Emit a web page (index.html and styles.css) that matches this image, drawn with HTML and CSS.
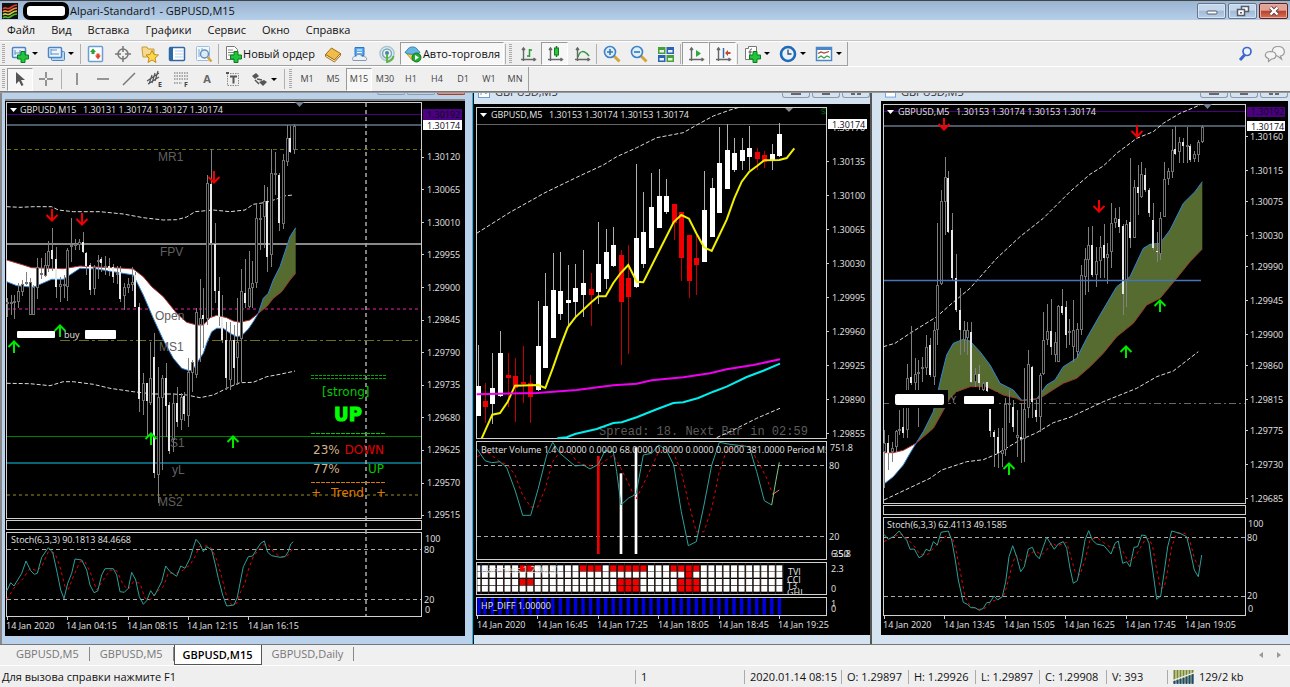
FILE: index.html
```html
<!DOCTYPE html>
<html lang="ru">
<head>
<meta charset="utf-8">
<title>Alpari-Standard1 - GBPUSD,M15</title>
<link rel="stylesheet" href="styles.css">
</head>
<body>
<svg width="0" height="0" class="defs" aria-hidden="true">
  <defs>
    <g id="down"><path d="M0-6V5M-5.500 0L0 5.500L5.500 0" fill="none" stroke="#f00000" stroke-width="2"/></g>
    <g id="up"><path d="M0 6V-5M-5.500 0L0-5.500L5.500 0" fill="none" stroke="#00e800" stroke-width="2"/></g>
    <path id="plus" d="M-2-5.500h4v3.500h3.500v4h-3.500v3.500h-4v-3.500h-3.500v-4h3.500z" fill="#1fc53a" stroke="#0a7a1c"/>
    <g id="axes" fill="none" stroke="#666" stroke-width="1.400"><path d="M4.500 3v13M2 14.500h14M3 5l1.500-2L6 5M14.500 13l2 1.500-2 1.500"/></g>
  </defs>
</svg>

<header class="titlebar">
  <svg class="logo" width="16" height="16" viewBox="0 0 16 16"><rect width="16" height="16" fill="#111"/><g fill="none" stroke-width="1.600"><path d="M1 6c3-3 4 1 7-1s4-3 7-3" stroke="#e23a2a"/><path d="M1 9c3-3 4 1 7-1s4-3 7-3" stroke="#f08a3a"/><path d="M1 12c3-3 4 1 7-1s4-3 7-3" stroke="#c8d23a"/><path d="M1 15c3-3 4 1 7-1s4-3 7-3" stroke="#52b52a"/></g></svg>
  <span class="mask"></span>
  <h1>Alpari-Standard1 - GBPUSD,M15</h1>
  <div class="winbtns">
    <button aria-label="Свернуть"><svg width="14" height="12" viewBox="0 0 14 12"><rect x="2" y="6" width="10" height="3" rx="1" fill="#fff" stroke="#555c68"/></svg></button>
    <button aria-label="Восстановить"><svg width="14" height="12" viewBox="0 0 14 12"><path d="M5.500 1.500h7v5h-7z" fill="#fff" stroke="#555c68" stroke-width="1.500"/><path d="M1.500 4.500h7v6h-7z" fill="#fff" stroke="#555c68" stroke-width="1.500"/><path d="M4 7h2v1.500H4z" fill="#555c68"/></svg></button>
    <button class="close" aria-label="Закрыть"><svg width="14" height="12" viewBox="0 0 14 12"><path d="M3.500 2.500l7 7M10.500 2.500l-7 7" stroke="#5a3a3a" stroke-width="4"/><path d="M3.500 2.500l7 7M10.500 2.500l-7 7" stroke="#fff" stroke-width="2.400"/></svg></button>
  </div>
</header>

<nav class="menu">
  <button>Файл</button><button>Вид</button><button>Вставка</button><button>Графики</button><button>Сервис</button><button>Окно</button><button>Справка</button>
</nav>

<div class="toolrow">
  <div class="toolbar" role="toolbar">
    <i class="grip"></i>
    <button class="dd" aria-label="Новый график"><svg width="18" height="18" viewBox="0 0 18 18"><rect x="1.500" y="2.500" width="13" height="10" rx="1" fill="#eaf3fc" stroke="#4a86c5" stroke-width="1.500"/><path d="M4 10V5M4 8h7M9 5v5" stroke="#5a90c8"/><use href="#plus" x="12" y="12"/></svg><b class="caret"></b></button>
    <button class="dd" aria-label="Профили"><svg width="18" height="18" viewBox="0 0 18 18"><rect x="4.500" y="6.500" width="13" height="9" rx="1" fill="#bcd7f2" stroke="#4a86c5"/><rect x="1.500" y="2.500" width="13" height="10" rx="1" fill="#eef5fc" stroke="#4a86c5" stroke-width="1.500"/><path d="M4 5h6M4 9h8M4 4v6" stroke="#5a90c8"/></svg><b class="caret"></b></button>
    <i class="sep"></i>
    <button aria-label="Обзор рынка"><svg width="18" height="18" viewBox="0 0 18 18"><rect x="1.500" y="1.500" width="14" height="15" rx="1" fill="#fff" stroke="#6a9fd6" stroke-width="1.500"/><path d="M3 7l3-3.500L9 7H7.500v2h-3V7z" fill="#28a52e"/><path d="M8 10.500l3 4 3-4h-1.500v-2h-3v2z" fill="#e0482c"/></svg></button>
    <button aria-label="Окно данных"><svg width="18" height="18" viewBox="0 0 18 18"><circle cx="9" cy="9" r="5" fill="none" stroke="#777" stroke-width="1.500"/><path d="M9 1v6M9 11v6M1 9h6M11 9h6" stroke="#777" stroke-width="1.500"/></svg></button>
    <button aria-label="Навигатор"><svg width="18" height="18" viewBox="0 0 18 18"><path d="M1 4V2h5l1 2h6v8H2z" fill="#f6d98a" stroke="#c99a33"/><path d="M11 5.500l2 4 4.500.5-3.500 3 1 4.500-4-2.500-4 2.500 1-4.500-3-3 4-.5z" fill="#fbd84a" stroke="#c48a1c"/></svg></button>
    <button aria-label="Терминал"><svg width="18" height="18" viewBox="0 0 18 18"><rect x="1.500" y="2.500" width="15" height="13" rx="1" fill="#fff" stroke="#2e68a8" stroke-width="1.500"/><path d="M3.500 3v12" stroke="#2e68a8" stroke-width="3"/><path d="M7 6h8M7 9h8M7 12h8" stroke="#b9cfe8"/></svg></button>
    <button aria-label="Тестер стратегий"><svg width="18" height="18" viewBox="0 0 18 18"><rect x="1.500" y="1.500" width="13" height="14" rx="1" fill="#f3f8fd" stroke="#9abfe0"/><path d="M4 4v8M7 3v8" stroke="#7ea6cd"/><circle cx="9.500" cy="9" r="4" fill="#d9ecfb" stroke="#6a8fb5" stroke-width="1.500"/><path d="M12.500 12l4 4.500" stroke="#d9a437" stroke-width="2.500"/></svg></button>
    <i class="sep"></i>
    <button class="order"><svg width="18" height="18" viewBox="0 0 18 18"><path d="M2.500 1.500h8l3 3v10h-11z" fill="#fff" stroke="#777"/><path d="M4 5h5M4 7.500h7M4 10h5" stroke="#888"/><use href="#plus" x="12" y="12"/></svg>Новый ордер</button>
    <button aria-label="MetaEditor"><svg width="18" height="18" viewBox="0 0 18 18"><path d="M1.500 9.500L7.500 3l9 5.500-6 6.500z" fill="#f0bd4c" stroke="#a36d14"/><path d="M1.500 9.500l9 5.500 6-6.500v2l-6 6.500-9-5.500z" fill="#fff3d0" stroke="#a36d14"/></svg></button>
    <button aria-label="VPS"><svg width="18" height="18" viewBox="0 0 18 18"><path d="M4 2.500h9v8H4z" fill="#59a9ee" stroke="#2a77c4"/><path d="M6 5h5M6 7.500h5" stroke="#fff"/><path d="M2 15.500c-1.500-3 1-4.500 3-4 1-3 5-2.500 6 0 3-1 6 2 4 4z" fill="#e9f0f8" stroke="#8597b0"/></svg></button>
    <button aria-label="Сигналы"><svg width="18" height="18" viewBox="0 0 18 18" fill="none"><circle cx="9" cy="8.500" r="7" stroke="#a8c6d8" stroke-width="1.500"/><circle cx="9" cy="8.500" r="4.500" stroke="#77a9b5" stroke-width="1.500"/><circle cx="9" cy="8" r="2" fill="#3d86b8"/><path d="M9 9v8c4-1 6-3 6.500-6" stroke="#5cb646" stroke-width="2"/></svg></button>
    <button class="auto on"><svg width="18" height="18" viewBox="0 0 18 18"><path d="M2 8l7 8 6-8z" fill="#f3cf4d" stroke="#c29522"/><path d="M1 7c3-1 2-5 7.500-5S13 6 16 7c0 3-15 3-15 0z" fill="#67b5e4" stroke="#3580b0"/><circle cx="12.500" cy="12.500" r="4.500" fill="#22aa36" stroke="#0c7a1e"/><path d="M11 10l4 2.500-4 2.500z" fill="#fff"/></svg>Авто-торговля</button>
    <i class="sep"></i>
    <i class="grip"></i>
    <button aria-label="Бары"><svg width="18" height="18" viewBox="0 0 18 18"><use href="#axes"/><path d="M10.500 4v8M8 11h2.500M10.500 5H13" stroke="#2c9a3c" stroke-width="1.500"/></svg></button>
    <button class="on" aria-label="Свечи"><svg width="18" height="18" viewBox="0 0 18 18"><use href="#axes"/><path d="M10.500 1v11" stroke="#127a22" stroke-width="1.500"/><rect x="8.500" y="3" width="4" height="7" fill="#2cc23e" stroke="#127a22"/></svg></button>
    <button aria-label="Линия"><svg width="18" height="18" viewBox="0 0 18 18"><use href="#axes"/><path d="M5 12c2-7 6-7 11-1" fill="none" stroke="#2c9a3c" stroke-width="1.500"/></svg></button>
    <i class="sep"></i>
    <button aria-label="Увеличить"><svg width="18" height="18" viewBox="0 0 18 18"><path d="M10.500 10.500l6 6" stroke="#d9a437" stroke-width="3"/><circle cx="7" cy="7" r="5.500" fill="#dff0fd" stroke="#3d83c4" stroke-width="1.600"/><path d="M4 7h6M7 4v6" stroke="#3577b8" stroke-width="1.600"/></svg></button>
    <button aria-label="Уменьшить"><svg width="18" height="18" viewBox="0 0 18 18"><path d="M10.500 10.500l6 6" stroke="#d9a437" stroke-width="3"/><circle cx="7" cy="7" r="5.500" fill="#dff0fd" stroke="#3d83c4" stroke-width="1.600"/><path d="M4 7h6" stroke="#3577b8" stroke-width="1.600"/></svg></button>
    <button aria-label="Выстроить окна"><svg width="18" height="18" viewBox="0 0 18 18"><path d="M1 2h7.500v7H1zM9.500 10H17v7H9.500z" fill="#47a03a"/><path d="M9.500 2H17v7H9.500zM1 10h7.500v7H1z" fill="#2b62b8"/><path d="M2.500 5h4.500v2.500H2.500zM11 5h4.500v2.500H11zM2.500 13h4.500v2.500H2.500zM11 13h4.500v2.500H11z" fill="#e5f1e5"/></svg></button>
    <i class="sep"></i>
    <button class="on" aria-label="Автопрокрутка"><svg width="18" height="18" viewBox="0 0 18 18"><use href="#axes"/><path d="M9 5l5 3.500L9 12z" fill="#2cab3c"/></svg></button>
    <button class="on" aria-label="Сдвиг графика"><svg width="18" height="18" viewBox="0 0 18 18"><use href="#axes"/><path d="M9.500 3v10" stroke="#2f6fb0" stroke-width="1.500"/><path d="M11 8l3-3v2h2.500v2H14v2z" fill="#c4482a"/></svg></button>
    <i class="sep"></i>
    <button class="dd" aria-label="Индикаторы"><svg width="18" height="18" viewBox="0 0 18 18"><path d="M2.500 3.500h3v-2h8v11h-2v2h-9z" fill="#fff" stroke="#777"/><path d="M9 4c-2 0-2 1-2 3v4M5.500 7H9" fill="none" stroke="#555"/><use href="#plus" x="12" y="12"/></svg><b class="caret"></b></button>
    <button class="dd" aria-label="Периоды"><svg width="18" height="18" viewBox="0 0 18 18"><circle cx="9" cy="9" r="7" fill="#e6f2fd" stroke="#1f69b8" stroke-width="2.600"/><path d="M9 4.500V9h3.500" fill="none" stroke="#445" stroke-width="1.300"/></svg><b class="caret"></b></button>
    <button class="dd" aria-label="Шаблоны"><svg width="18" height="18" viewBox="0 0 18 18"><rect x="1.500" y="2.500" width="15" height="13" fill="#fff" stroke="#4a86c5" stroke-width="1.500"/><path d="M1.500 4h15" stroke="#4a86c5" stroke-width="2"/><path d="M3 8.500l3-1.500 3 1 5-1.500" fill="none" stroke="#a4452c" stroke-width="1.300"/><path d="M3 13l3-2 3 2 3-2 3 1.500" fill="none" stroke="#3b9a4a" stroke-width="1.300"/></svg><b class="caret"></b></button>
  </div>
  <div class="rightside">
    <button aria-label="Поиск"><svg width="16" height="16" viewBox="0 0 16 16"><path d="M6.500 9L2 14" stroke="#3a66cf" stroke-width="3"/><circle cx="9" cy="5.500" r="4" fill="#eef4ff" stroke="#3a66cf" stroke-width="1.700"/></svg></button>
    <button aria-label="Чат"><svg width="22" height="18" viewBox="0 0 22 18"><path d="M14 1.500c8 0 8 9 2.500 9.500l1 3-4-3C6 10.500 7 1.500 14 1.500z" fill="#f4f4f4" stroke="#999" stroke-width="1.200"/><path d="M6.500 6.500c7 0 7 7 1 7.500l-3 2.500v-3C0 12 0 7 6.500 6.500z" fill="#f4f4f4" stroke="#999" stroke-width="1.200"/></svg></button>
  </div>
</div>

<div class="toolrow second">
  <div class="toolbar narrow" role="toolbar">
    <i class="grip"></i>
    <button class="on" aria-label="Курсор"><svg width="18" height="18" viewBox="0 0 18 18"><path d="M5 2v12l3-3 2.500 5 2-1-2.500-5h4z" fill="#555"/></svg></button>
    <button aria-label="Перекрестие"><svg width="18" height="18" viewBox="0 0 18 18"><path d="M9 2v6M9 10v6M2 9h6M10 9h6" stroke="#777" stroke-width="1.500"/></svg></button>
    <i class="sep"></i>
    <button aria-label="Вертикальная линия"><svg width="18" height="18" viewBox="0 0 18 18"><path d="M9 3v12" stroke="#777" stroke-width="1.500"/></svg></button>
    <button aria-label="Горизонтальная линия"><svg width="18" height="18" viewBox="0 0 18 18"><path d="M3 9h12" stroke="#777" stroke-width="1.500"/></svg></button>
    <button aria-label="Трендовая линия"><svg width="18" height="18" viewBox="0 0 18 18"><path d="M3 15L15 3" stroke="#777" stroke-width="1.500"/></svg></button>
    <button aria-label="Канал"><svg width="18" height="18" viewBox="0 0 18 18"><path d="M1 11L13 3M2 14L13 7M3 14l3-9M6 13l3-10M9 11l3-10" stroke="#555" stroke-width="1.200"/><text x="12" y="17" class="mini">E</text></svg></button>
    <button aria-label="Фибоначчи"><svg width="18" height="18" viewBox="0 0 18 18"><path d="M2 3h14M2 6h14M2 9h14M2 13h8" stroke="#666" stroke-width="1.200" stroke-dasharray="1.500 1"/><text x="12" y="17" class="mini">F</text></svg></button>
    <button class="letter">A</button>
    <button aria-label="Метка"><svg width="18" height="18" viewBox="0 0 18 18"><rect x="3.500" y="3.500" width="11" height="12" fill="none" stroke="#888" stroke-dasharray="1.500 1"/><path d="M6 6.500h7M9.500 6.500v7" stroke="#555" stroke-width="2"/><path d="M2 2h3v2H2z" fill="#555"/></svg></button>
    <button class="dd" aria-label="Стрелки"><svg width="18" height="18" viewBox="0 0 18 18"><path d="M2 6l4-3 3 3-4 3z" fill="#555"/><path d="M9 12l4 4 4-4-3-2z" fill="#555"/><path d="M7 9l5 1M5 10l4 4" stroke="#555" stroke-width="1.500"/></svg><b class="caret"></b></button>
    <i class="sep"></i>
    <i class="grip"></i>
    <button>M1</button><button>M5</button><button class="on">M15</button><button>M30</button><button>H1</button><button>H4</button><button>D1</button><button>W1</button><button>MN</button>
  </div>
</div>

<main class="workspace">
  <section class="win win-a">
    <div class="wintitle"><span class="stub"></span><span class="stub"></span><span class="stub red"></span></div>
    <svg class="chart" id="a" viewBox="5 101 460 535">
      <g class="frame"><rect x="6.500" y="102.500" width="415" height="416"/><rect x="6.500" y="520.500" width="415" height="9"/><rect x="6.500" y="532.500" width="415" height="84"/></g>
      <g class="rules">
        <path d="M7 114.500H421" stroke="#4b0082"/><path d="M7 125H421" stroke="#4c5866" stroke-width="2"/>
        <path d="M7 149.500H421" stroke="#6e6e00" stroke-dasharray="4 3"/>
        <path d="M7 244H421" stroke="#8a8a8a" stroke-width="2"/>
        <path d="M7 309H421" stroke="#7a1058" stroke-width="2" stroke-dasharray="3 3"/>
        <path d="M60 340.500H421" stroke="#6e6e20" stroke-dasharray="10 3 3 3"/>
        <path d="M7 436.500H421" stroke="#008000"/><path d="M7 463H421" stroke="#0a6478" stroke-width="2"/>
        <path d="M7 495H421" stroke="#4a4a10" stroke-width="2" stroke-dasharray="3 3"/>
        <path d="M7 549.500H421M7 599.500H421" stroke="#aaa" stroke-dasharray="4 3"/>
      </g>
      <g class="plot"></g>
      <g class="pivot"><text x="158" y="161">MR1</text><text x="160" y="256">FPV</text><text x="155" y="320">Open</text><text x="159" y="351">MS1</text><text x="170" y="447">S1</text><text x="172" y="474">yL</text><text x="158" y="506">MS2</text></g>
      <path d="M366 103V616" stroke="#aaa" stroke-width="1.500" stroke-dasharray="4 3"/>
      <use href="#down" x="52" y="215"/><use href="#down" x="82" y="219"/><use href="#down" x="214" y="177"/>
      <use href="#up" x="14" y="347"/><use href="#up" x="60" y="331"/><use href="#up" x="151" y="439"/><use href="#up" x="233" y="442"/>
      <rect x="17" y="331" width="38" height="7" rx="1" fill="#fff"/><rect x="85" y="330" width="31" height="9" rx="1" fill="#fff"/>
      <g class="signal">
        <path d="M311 375.500H386M311 378.500H386" stroke="#00a800" stroke-dasharray="3 1"/><path d="M311 433.500H386" stroke="#00c800" stroke-dasharray="4 1"/><path d="M311 482.500H386" stroke="#e07800" stroke-dasharray="4 1"/>
        <text x="322" y="396" fill="#00c800">[strong]</text>
        <text x="348" y="421" class="big" text-anchor="middle">UP</text>
        <text x="313" y="454" fill="#d2b48c">23%</text><text x="384" y="454" fill="#e00000" text-anchor="end">DOWN</text>
        <text x="313" y="473" fill="#d2b48c">77%</text><text x="384" y="473" fill="#00c800" text-anchor="end">UP</text>
        <text x="311" y="497" fill="#e07800">+</text><text x="331" y="497" fill="#e07800">Trend</text><text x="376" y="497" fill="#e07800">+</text>
      </g>
      <path d="M10 108h7l-3.500 4z" fill="#fff"/><path d="M295 102h9l-4.500 5z" fill="#708090"/>
      <g class="lbl">
        <text x="20" y="113">GBPUSD,M15</text><text x="83" y="113">1.30131 1.30174 1.30127 1.30174</text>
        <text x="64" y="338">buy</text>
        <text x="11" y="543">Stoch(6,3,3) 90.1813 84.4668</text>
        <rect x="423" y="109" width="39" height="11" fill="#4b0082"/><text x="427" y="118" class="dark">1.30192</text>
        <rect x="423" y="120" width="39" height="10" fill="#fff"/><text x="427" y="129" class="dark">1.30174</text>
        <text x="427" y="160">1.30120</text><text x="427" y="193">1.30065</text><text x="427" y="226">1.30010</text><text x="427" y="258">1.29955</text><text x="427" y="291">1.29900</text><text x="427" y="323">1.29845</text><text x="427" y="356">1.29790</text><text x="427" y="388">1.29735</text><text x="427" y="421">1.29680</text><text x="427" y="453">1.29625</text><text x="427" y="486">1.29570</text><text x="427" y="518">1.29515</text>
        <text x="425" y="542">100</text><text x="424" y="553">80</text><text x="424" y="603">20</text><text x="425" y="613">0</text>
        <text x="6" y="629">14 Jan 2020</text><text x="66" y="629">14 Jan 04:15</text><text x="127" y="629">14 Jan 08:15</text><text x="187" y="629">14 Jan 12:15</text><text x="248" y="629">14 Jan 16:15</text>
      </g>
      <path class="ticks" d="M7.500 617v3M67.500 617v3M128.500 617v3M188.500 617v3M248.500 617v3M422 157.500h2M422 189.500h2M422 222.500h2M422 254.500h2M422 287.500h2M422 320.500h2M422 352.500h2M422 385.500h2M422 417.500h2M422 450.500h2M422 483.500h2M422 515.500h2"/>
    </svg>
  </section>

  <section class="win win-b">
    <div class="wintitle"><svg width="12" height="11" viewBox="0 0 12 11"><rect x=".5" y=".5" width="11" height="10" fill="#fff" stroke="#6a9fd6"/><path d="M3 3v5M6 2l2 5 2-5" stroke="#6a9fd6" fill="none"/></svg><span class="cap">GBPUSD,M5</span><span class="stub min"></span><span class="stub max"></span><span class="stub cls"></span></div>
    <svg class="chart" id="b" viewBox="474 104 396 531">
      <g class="frame"><rect x="476.500" y="107.500" width="350" height="331"/><rect x="476.500" y="441.500" width="350" height="118"/><rect x="476.500" y="562.500" width="350" height="32"/><rect x="476.500" y="597.500" width="350" height="18"/></g>
      <g class="rules"><path d="M477 124.500H826" stroke="#666"/><path d="M477 465.500H826M477 536.500H826" stroke="#aaa" stroke-dasharray="4 3"/></g>
      <path d="M785 108h8l-4 4z" fill="#888"/>
      <text x="599" y="435" class="spread">Spread: 18. Next Bar in 02:59</text>
      <g class="plot"></g>
      <path d="M826 109c-5-1-6 2-3 2.500s4 3-1.500 2" fill="none" stroke="#006400"/>
      <path d="M480 113h7l-3.500 4z" fill="#fff"/>
      <g class="lbl">
        <text x="491" y="118">GBPUSD,M5</text><text x="549" y="118">1.30153 1.30174 1.30153 1.30174</text>
        <text x="832" y="131">1.30170</text><rect x="828" y="119" width="39" height="10" fill="#fff"/><text x="832" y="128" class="dark">1.30174</text>
        <text x="832" y="165">1.30135</text><text x="832" y="199">1.30100</text><text x="832" y="233">1.30065</text><text x="832" y="267">1.30030</text><text x="832" y="301">1.29995</text><text x="832" y="335">1.29960</text><text x="832" y="369">1.29925</text><text x="832" y="403">1.29890</text><text x="832" y="437">1.29855</text>
        <svg x="477" y="442" width="349" height="117" viewBox="477 442 349 117"><text x="481" y="453">Better Volume 1.4 0.0000 0.0000 68.0000 0.0000 0.0000 0.0000 381.0000  Period M5 St</text></svg>
        <text x="830" y="451">751.8</text><text x="829" y="469">80</text><text x="829" y="540">20</text><text x="831" y="557">6.50</text><text x="833" y="557">35.8</text>
        <text x="481" y="573">Hareness 1.22(0,3)</text>
        <svg x="477" y="563" width="349" height="31" viewBox="477 563 349 31"><text x="788" y="575">TVI</text><text x="787" y="583">CCI</text><text x="787" y="589">T3.</text><text x="787" y="596">GHI</text></svg>
        <text x="831" y="572">2.3</text><text x="831" y="592">0</text>
        <text x="481" y="609">HP_DIFF 1.00000</text><text x="831" y="607">1</text><text x="831" y="612">0</text>
        <text x="477" y="628">14 Jan 2020</text><text x="537" y="628">14 Jan 16:45</text><text x="597" y="628">14 Jan 17:25</text><text x="658" y="628">14 Jan 18:05</text><text x="718" y="628">14 Jan 18:45</text><text x="778" y="628">14 Jan 19:25</text>
      </g>
      <path class="ticks" d="M477.500 616v3M537.500 616v3M598.500 616v3M658.500 616v3M719.500 616v3M779.500 616v3M827 161.500h2M827 195.500h2M827 229.500h2M827 263.500h2M827 297.500h2M827 331.500h2M827 365.500h2M827 399.500h2M827 433.500h2"/>
    </svg>
  </section>

  <section class="win win-c">
    <div class="wintitle"><svg width="11" height="11" viewBox="0 0 12 11"><rect x=".5" y=".5" width="11" height="10" fill="#fff" stroke="#6a9fd6"/></svg><span class="cap">GBPUSD,M5</span><span class="stub min"></span><span class="stub max"></span><span class="stub cls"></span></div>
    <svg class="chart" id="c" viewBox="881 101 407 534">
      <g class="frame"><rect x="883.500" y="104.500" width="362" height="399"/><rect x="883.500" y="505.500" width="362" height="9"/><rect x="883.500" y="517.500" width="362" height="98"/></g>
      <g class="rules"><path d="M884 111.500H1245" stroke="#4b0082"/><path d="M884 126H1245" stroke="#4c5866" stroke-width="2"/><path d="M884 403.500H1245" stroke="#666" stroke-dasharray="7 3 2 3"/><path d="M884 537.500H1245M884 596H1245" stroke="#aaa" stroke-dasharray="4 3"/></g>
      <g class="plot"></g>
      <path d="M884 280.500H1201" stroke="#4a74b8" stroke-width="1.500"/>
      <rect x="889" y="390" width="59" height="18" fill="#000"/><rect x="956" y="392" width="42" height="17" fill="#000"/>
      <rect x="895" y="394" width="49" height="11" rx="2" fill="#fff"/><rect x="964" y="396" width="30" height="8" rx="1" fill="#fff"/>
      <use href="#down" x="944" y="124"/><use href="#down" x="1099" y="206"/><use href="#down" x="1137" y="131"/>
      <use href="#up" x="1160" y="306"/><use href="#up" x="1126" y="352"/><use href="#up" x="1009" y="469"/>
      <path d="M887 110h7l-3.500 4z" fill="#fff"/><path d="M1203 104h9l-4.500 5z" fill="#708090"/>
      <g class="lbl">
        <text x="898" y="115">GBPUSD,M5</text><text x="956" y="115">1.30153 1.30174 1.30153 1.30174</text><text x="951" y="403" class="grey">Y</text>
        <rect x="1247" y="107" width="38" height="10" fill="#4b0082"/><text x="1251" y="115" class="dark">1.30192</text>
        <rect x="1247" y="121" width="38" height="10" fill="#fff"/><text x="1251" y="130" class="dark">1.30174</text>
        <text x="1250" y="140">1.30160</text><text x="1250" y="174">1.30115</text><text x="1250" y="205">1.30075</text><text x="1250" y="239">1.30030</text><text x="1250" y="270">1.29990</text><text x="1250" y="304">1.29945</text><text x="1250" y="338">1.29900</text><text x="1250" y="369">1.29860</text><text x="1250" y="403">1.29815</text><text x="1250" y="434">1.29775</text><text x="1250" y="468">1.29730</text><text x="1250" y="502">1.29685</text>
        <text x="887" y="528">Stoch(6,3,3) 62.4113 49.1585</text>
        <text x="1248" y="527">100</text><text x="1247" y="541">80</text><text x="1247" y="599">20</text><text x="1248" y="612">0</text>
        <text x="883" y="628">14 Jan 2020</text><text x="944" y="628">14 Jan 13:45</text><text x="1004" y="628">14 Jan 15:05</text><text x="1064" y="628">14 Jan 16:25</text><text x="1125" y="628">14 Jan 17:45</text><text x="1185" y="628">14 Jan 19:05</text>
      </g>
      <path class="ticks" d="M884.500 616v3M944.500 616v3M1005.500 616v3M1065.500 616v3M1126.500 616v3M1186.500 616v3M1246 136.500h2M1246 170.500h2M1246 201.500h2M1246 235.500h2M1246 266.500h2M1246 300.500h2M1246 334.500h2M1246 365.500h2M1246 399.500h2M1246 430.500h2M1246 464.500h2M1246 498.500h2"/>
    </svg>
  </section>
</main>

<div class="tabs" role="tablist">
  <button role="tab">GBPUSD,M5</button><button role="tab">GBPUSD,M5</button><button role="tab" class="active" aria-selected="true">GBPUSD,M15</button><button role="tab">GBPUSD,Daily</button>
  <div class="scroll"><button aria-label="Влево"><svg width="6" height="8" viewBox="0 0 6 8"><path d="M5 1L1 4l4 3z" fill="#999"/></svg></button><button aria-label="Вправо"><svg width="6" height="8" viewBox="0 0 6 8"><path d="M1 1l4 3-4 3z" fill="#999"/></svg></button></div>
</div>

<footer class="status">
  <span class="help">Для вызова справки нажмите F1</span><span>1</span><span>2020.01.14 08:15</span><span>O: 1.29897</span><span>H: 1.29926</span><span>L: 1.29897</span><span>C: 1.29908</span><span>V: 393</span>
  <span class="net"><svg width="22" height="14" viewBox="0 0 22 14"><path d="M1.500 0v13M4.500 0v13M7.500 0v13M10.500 0v13M13.500 0v13M16.500 0v13M19.500 0v13" stroke="#78882a" stroke-width="2"/><path d="M1.500 11v3M4.500 10v4M7.500 9v5M10.500 8v6M13.500 6.500v7.500M16.500 5v9M19.500 4v10" stroke="#1c4a70" stroke-width="2"/><path d="M0 10.500l8-3L22 2.500" stroke="#f0f0f0" stroke-width="1.300" fill="none"/></svg>129/2 kb</span>
</footer>
<script src="chart.js"></script>
</body>
</html>
```
FILE: styles.css
```css
* { box-sizing: border-box; }
body {
  margin: 0;
  min-height: 100vh;
  display: flex;
  flex-direction: column;
  background: #efefef;
  color: #111;
  font: 11px/14px "Open Sans", "Noto Sans", sans-serif;
}
.defs { position: absolute; }
button {
  border: 0;
  padding: 0;
  background: none;
  color: inherit;
  font: inherit;
}
svg { display: block; flex: none; }

.titlebar {
  display: flex;
  align-items: center;
  height: 20px;
  padding: 0 2px;
  border-top: 1px solid #444;
  background: linear-gradient(#99b4d1, #b6cfe9);
}
.mask {
  width: 46px;
  height: 18px;
  margin: 0 1px 0 5px;
  border: 4px solid #000;
  border-radius: 7px;
  background: #fff;
}
.titlebar h1 { margin: 0; font-size: 11px; font-weight: 400; }
.winbtns { display: flex; gap: 2px; margin-left: auto; }
.winbtns button {
  display: grid;
  place-items: center;
  width: 29px;
  height: 16px;
  border: 1px solid #66758c;
  border-radius: 2px;
  background: linear-gradient(#c3d6ea 45%, #a1bad6 50%, #b8cfe8);
  box-shadow: inset 0 0 0 1px #d5e3f2;
}
.winbtns .close {
  border-color: #6a1d14;
  background: linear-gradient(#e0a396 45%, #b8402a 50%, #d47358);
  box-shadow: inset 0 0 0 1px #e5aca0;
}

.menu { display: flex; gap: 16px; height: 21px; padding-left: 7px; border-bottom: 1px solid #c4c4c4; }

.toolrow {
  display: flex;
  justify-content: space-between;
  height: 25px;
  border-top: 1px solid #fff;
}
.toolbar {
  display: flex;
  align-items: center;
  border-right: 1px solid #a0a0a0;
  border-bottom: 1px solid #a0a0a0;
  white-space: nowrap;
}
.toolrow.second { height: 26px; border-bottom: 1px solid #777; }
.second .toolbar { border-bottom: 0; font-size: 9px; color: #444; }
.grip {
  width: 3px;
  height: 20px;
  margin: 0 2px;
  background: repeating-linear-gradient(#aaa 0 1px, #efefef 1px 2px);
}
.sep { width: 1px; height: 20px; margin: 0 1px; background: #b0b0b0; }
.narrow .sep { margin: 0 2px; }
.toolbar button {
  display: flex;
  align-items: center;
  justify-content: center;
  width: 27px;
  height: 23px;
  border: 1px solid transparent;
}
.toolbar.narrow button { width: 26px; }
.toolbar button.on {
  border-color: #9a9a9a #fff #fff #9a9a9a;
  background: #f7f7f7;
}
.toolbar button.dd,
.toolbar.narrow button.dd { width: 36px; gap: 3px; padding-right: 1px; }
.toolbar button.order { width: 99px; gap: 1px; }
.toolbar button.auto { width: 104px; gap: 1px; }
.caret { border: 3px solid transparent; border-top-color: #000; border-bottom: 0; }
.toolbar .letter { font-size: 11px; font-weight: 700; color: #666; }
.mini { font: 700 7px "Open Sans", sans-serif; fill: #444; }
.rightside { display: flex; align-items: center; gap: 10px; padding-right: 4px; }

.workspace {
  display: grid;
  grid-template-columns: 473fr 397fr 420fr;
  align-items: stretch;
  border-top: 1px solid #999;
  border-bottom: 1px solid #777;
  overflow: hidden;
}
.win { background: #b9d1ea; min-width: 0; padding-bottom: 8px; }
.win-a { padding-left: 3px; padding-right: 7px; border-left: 2px solid #888; border-right: 1px solid #20b8e0; }
.win-b { border-left: 1px solid #111; background: #d5e2f0; }
.win-c { border-left: 2px solid #555; padding-left: 9px; padding-right: 2px; background: #d5e2f0; }
.wintitle { display: flex; justify-content: flex-end; gap: 2px; height: 8px; overflow: hidden; }
.win-b .wintitle { height: 11px; }
.win-a .wintitle { border-bottom: 2px solid #888; }
.wintitle svg { margin: -6px 0 0 4px; }
.cap { margin: -8px auto 0 3px; color: #333; }
.stub {
  width: 28px;
  height: 5px;
  border: 1px solid #8a9bb0;
  border-top: 0;
  border-radius: 0 0 3px 3px;
  background: no-repeat 50% 0 / 10px 2px;
}
.win-a .stub { height: 2px; }
.stub.red { border-color: #a04030; background: #dd9080; }
.stub.min,
.stub.max,
.stub.cls { background-image: linear-gradient(#667, #667); }
.stub.max { background-size: 8px 2px; }
.stub.cls { background-image: linear-gradient(90deg, #667 40%, transparent 40% 60%, #667 60%); }
.chart { width: 100%; height: auto; background: #000; }

.frame rect { fill: none; stroke: #d0d0d0; shape-rendering: crispEdges; }
.rules path, .ticks, .candles { shape-rendering: crispEdges; }
.ticks { fill: none; stroke: #ccc; }
.lbl { font: 9px "Open Sans", "Noto Sans", sans-serif; fill: #e4e4e4; white-space: pre; }
.lbl .dark { fill: #0a0a14; }
.lbl .grey { fill: #888; }
.pivot { font: 12px "Liberation Sans", Arial, sans-serif; fill: #606060; }
.signal { font: 12px "DejaVu Sans", sans-serif; }
.signal .big { font: 700 20px "DejaVu Sans Condensed", sans-serif; fill: #0f0; stroke: #0f0; }
.spread { font: 12px "Liberation Mono", monospace; fill: #5c5c5c; }

.tabs {
  display: flex;
  height: 20px;
  padding-left: 6px;
  background: #f0f0f0;
  color: #777;
}
.tabs > button { margin: 2px 0 4px; padding: 0 10px; border-right: 1px solid #888; }
.tabs > button.active {
  margin: 0;
  padding: 0 8px;
  border: 1px solid #555;
  border-top: 0;
  background: #fff;
  color: #000;
  font-weight: 600;
}
.scroll { display: flex; gap: 12px; align-items: center; margin-left: auto; padding-right: 8px; }

.status {
  display: grid;
  grid-template-columns: 1fr 109px 97px 67px 67px 64px 67px 61px 123px;
  align-items: center;
  flex: 1;
  min-height: 21px;
  border-top: 1px solid #fff;
}
.status span { padding-left: 5px; border-left: 1px solid #aaa; white-space: nowrap; }
.status .help { padding-left: 2px; border: 0; }
.status .net { display: flex; align-items: center; gap: 4px; }
```
FILE: chart.js
```javascript
// Plot data is stored in thirds of a pixel, measured from each chart's origin.
const NS = 'http://www.w3.org/2000/svg';

function add(parent, name, attrs) {
  const node = document.createElementNS(NS, name);
  for (const key in attrs) node.setAttribute(key, attrs[key]);
  parent.appendChild(node);
  return node;
}

function plot(id, ox, oy) {
  const root = document.querySelector('#' + id + ' .plot');
  const px = (v, o) => Math.round(v / 3 + o);
  const pts = (s, dy) => s.trim().split(/\s+/).map(p => {
    const [x, y] = p.split(',').map(Number);
    return (x / 3 + ox).toFixed(1) + ',' + ((y + (dy || 0)) / 3 + oy).toFixed(1);
  }).join(' ');
  return {
    line(s, stroke, width, dash, dy) {
      add(root, 'polyline', { points: pts(s, dy), fill: 'none', stroke, 'stroke-width': width || 1, 'stroke-dasharray': dash || 'none' });
    },
    area(top, bottom, fill) {
      const back = bottom.trim().split(/\s+/).reverse().join(' ');
      add(root, 'polygon', { points: pts(top + ' ' + back), fill });
      this.line(top, fill === '#fff' ? '#b03030' : '#2f86d8', 1);
      this.line(bottom, fill === '#fff' ? '#2f86d8' : '#9c3a28', 1);
    },
    candles(rows, style) {
      const g = add(root, 'g', { class: 'candles' });
      rows.trim().split('\n').forEach(row => {
        const [x, hi, lo, top, bot, kind] = row.trim().split(' ');
        const cx = px(+x, ox), y1 = px(+hi, oy), y2 = px(+lo, oy), t = px(+top, oy), h = Math.max(1, px(+bot, oy) - t);
        if (style === 'wide') {
          const red = kind === 'r';
          add(g, 'rect', { x: cx, y: y1, width: 1, height: y2 - y1, fill: red ? '#c00000' : '#b0b0b0' });
          add(g, 'rect', { x: cx - 2, y: t, width: 5, height: h, fill: red ? '#f00000' : '#fff' });
        } else {
          add(g, 'rect', { x: cx, y: y1, width: 1, height: y2 - y1, fill: '#808080' });
          if (kind === '1') add(g, 'rect', { x: cx - 1, y: t, width: 2, height: h, fill: '#e8e8e8' });
          else add(g, 'rect', { x: cx - 0.5, y: t + 0.5, width: 2, height: Math.max(1, h - 1), fill: '#000', stroke: '#707070' });
        }
      });
    },
    block(x, y, w, h, fill) {
      add(root, 'rect', { x: x / 3 + ox, y: y / 3 + oy, width: w / 3, height: h / 3, fill });
    }
  };
}

const DASH = '4 2', TEAL = '#2ea098', RED = '#e80000', OLIVE = '#556b2f';

// GBPUSD,M15
const a = plot('a', 0, 95);
a.area('20,495 70,510 95,518 190,521 240,513 290,516 360,519 400,522 430,545 455,575 490,605 530,655 560,682 590,690 610,690 630,668 650,661 680,668 700,678 720,682 750,675 775,655',
  '20,560 50,572 100,577 155,553 190,553 240,520 290,522 400,540 430,600 460,670 490,735 520,790 545,820 570,828 585,815 600,790 610,775 622,740 635,710 650,700 670,700 690,715 710,725 725,722 745,702 760,680 775,655', '#fff');
a.area('775,655 790,610 805,595 820,555 840,515 855,470 870,425 887,398', '775,655 800,635 820,610 845,590 870,555 887,535', OLIVE);
a.line('20,335 60,337 100,335 155,335 175,345 220,350 300,350 370,357 430,368 490,375 530,374 560,366 585,350 640,345 690,350 735,345 760,328 800,322 830,312 850,303 880,300', '#ddd', 1, DASH);
a.line('20,865 90,866 150,872 190,860 220,860 280,868 330,880 400,890 460,897 520,897 560,900 600,908 640,900 690,875 720,863 760,862 800,845 840,838 885,828', '#ddd', 1, DASH);
a.candles(`22 610 665 620 624 0
33 600 660 620 624 0
43 600 673 619 623 0
54 565 640 588 620 0
66 555 602 568 592 0
78 530 570 560 568 0
89 550 659 562 659 0
100 570 659 575 659 0
112 488 612 515 578 0
123 490 552 533 537 0
134 475 546 510 543 0
145 437 530 467 512 0
157 400 527 464 492 1
168 457 608 493 577 1
180 545 620 568 577 0
191 540 608 568 573 0
202 460 617 466 575 0
214 369 500 450 453 0
225 432 465 447 451 0
236 433 466 440 449 0
248 411 473 441 471 1
259 472 540 474 512 1
271 504 600 511 585 1
282 511 600 515 583 0
293 480 552 495 500 0
304 487 532 493 505 1
315 483 540 512 514 0
327 489 543 512 528 1
338 506 564 517 545 1
350 513 568 533 537 0
361 514 620 530 611 1
373 565 646 575 603 0
384 550 595 568 579 0
395 516 588 560 570 0
406 532 637 540 635 1
418 625 950 635 912 1
429 835 960 865 917 0
440 865 1030 865 917 1
451 740 930 850 925 0
462 715 1150 785 1135 1
474 815 1225 907 1140 0
486 840 1125 850 908 0
497 805 1025 850 932 1
508 920 1078 930 1068 1
520 893 1070 925 1035 0
531 875 995 925 980 1
542 895 1005 905 975 0
553 890 978 903 958 1
565 790 995 830 963 0
576 795 890 800 835 0
588 640 850 650 840 0
599 553 800 670 690 0
610 580 760 660 673 1
622 240 690 265 672 0
633 163 665 268 445 1
644 385 625 448 588 1
656 545 692 588 665 1
667 600 745 665 735 1
679 680 885 735 848 1
690 680 885 735 855 0
701 690 870 735 820 1
712 610 870 740 790 0
724 522 860 588 733 0
735 493 640 593 625 1
746 467 640 580 637 0
757 497 640 565 580 0
769 325 578 370 565 0
780 330 465 370 373 0
791 270 460 317 365 0
802 275 532 318 485 1
814 163 515 235 480 0
826 172 300 235 240 0
837 235 407 240 385 1
848 178 403 195 388 0
860 90 213 130 200 0
871 93 175 130 170 1
883 88 177 93 165 0`);
a.line('20,718 45,680 70,655 90,625 110,632 125,620 145,575 165,580 180,620 195,680 205,688 220,650 240,605 255,605 270,635 290,690 310,660 330,630 350,632 370,675 385,688 400,665 420,670 435,715 450,720 470,695 490,680 505,640 530,640 550,630 570,615 585,590 598,560 620,557 635,565 650,600 665,650 680,710 695,735 710,730 720,700 735,670 745,630 760,590 775,570 790,555 805,553 820,575 840,590 860,590 875,570 880,562', RED, 1, '3 3', 795);
a.line('20,693 32,668 42,678 65,640 78,603 92,632 103,643 112,640 125,592 145,563 158,577 172,640 182,690 192,716 203,670 215,640 225,597 245,600 260,630 270,675 282,698 293,693 305,645 315,626 340,626 350,645 360,695 373,697 385,685 395,637 407,660 418,710 430,733 440,722 452,692 463,708 475,685 485,665 497,618 510,635 530,649 542,618 555,625 570,595 580,563 588,538 600,552 610,575 620,560 635,570 645,610 655,655 668,705 680,738 702,735 712,712 720,670 730,620 745,590 758,588 770,568 782,550 793,543 803,577 815,587 840,592 855,590 865,575 872,552 880,545', TEAL, 1, '', 795);

// GBPUSD,M5
const b = plot('b', 470, 85);
b.line('20,445 120,382 225,323 320,277 400,240 440,215 500,188 560,158 640,143 680,120 730,93 780,75 808,67', '#ddd', 1, DASH);
b.line('740,1058 800,1030 860,1000 930,970', '#ddd', 1, DASH);
b.candles(`24 780 993 903 993 w
44 895 1015 947 965 r
67 803 1017 908 956 w
90 738 935 803 932 w
113 803 965 870 880 r
135 820 1010 872 910 r
158 783 953 890 898 r
181 870 1013 893 937 r
203 648 918 783 915 w
226 563 850 662 850 w
248 503 760 615 758 w
271 500 705 617 687 w
293 541 720 645 653 w
316 537 700 608 651 w
340 495 697 594 631 w
362 563 722 612 630 r
385 412 658 538 622 w
407 432 613 500 583 w
430 427 545 480 543 w
453 495 840 509 651 r
475 480 808 580 636 r
498 237 608 460 607 w
520 322 548 441 537 w
543 265 490 366 489 w
566 251 430 333 430 w
589 282 387 333 381 w
611 357 465 357 413 r
634 382 588 382 518 r
657 450 640 450 589 r
679 450 630 518 541 r
702 257 532 376 531 w
725 280 455 309 455 w
747 126 384 234 384 w
770 118 311 195 311 w
793 158 260 203 255 w
815 160 255 195 228 w
838 123 255 190 215 w
860 190 255 201 223 r
883 197 250 209 231 r
906 176 255 206 227 w
928 115 215 147 214 w`, 'wide');
b.line('35,1060 67,989 90,984 113,950 135,902 205,900 226,909 248,850 271,785 293,727 316,697 362,653 385,634 407,634 430,594 453,563 475,540 500,590 520,592 566,500 611,411 634,390 657,401 679,445 702,487 725,498 747,452 770,404 793,340 815,290 838,260 860,244 883,226 928,225 950,219 973,190', '#f0f000', 2);
b.line('20,928 200,924 320,915 430,901 500,896 545,886 640,877 720,865 770,853 850,840 930,823', '#f000f0', 2);
b.line('262,1060 290,1057 315,1047 380,1032 430,1014 455,1012 500,997 560,973 610,954 640,952 685,939 730,920 770,905 830,876 880,857 930,836', '#00f0f0', 2);
b.block(381, 1113, 8, 294, '#f00000');
b.block(449, 1165, 8, 242, '#fff');
b.block(494, 1087, 8, 320, '#fff');
b.line('22,65 50,50 90,80 113,90 135,120 158,180 182,216 203,216 226,160 248,80 270,50 300,50 320,80 350,92 385,92 430,60 453,100 498,193 543,100 566,50 589,45 611,55 634,110 655,200 679,290 702,290 725,220 748,110 770,45 815,30 840,38 870,90 890,130 908,178', RED, 1, '3 3', 1050);
b.line('908,178 928,165', '#e08050', 1, '', 1050);
b.line('22,43 45,77 65,83 90,80 110,98 135,165 158,241 182,241 205,160 230,60 248,22 270,55 315,93 340,90 360,102 385,88 405,47 430,50 440,110 453,210 475,190 498,178 520,60 545,55 566,30 589,45 611,90 634,230 655,332 679,320 702,210 725,90 748,22 780,28 838,35 860,110 883,197 905,210', TEAL, 1, '', 1050);
b.line('905,210 917,140 928,82', '#80c880', 1, '', 1050);

// Indicator grid: one column for each bar, red cells mark a falling signal
const cells = [
  [6, 7, 14, 15, 16, 18, 19, 20, 21, 22, 26, 27, 28, 29],
  [28],
  [6, 7, 19, 20, 21, 27, 28, 29],
  [19, 20, 21, 27, 28, 29]
];
cells.forEach((reds, r) => {
  for (let i = 0; i <= 40; i++) {
    const x = 22 + i * 22.65, y = 1441 + [0, 19, 41, 61][r];
    b.block(Math.max(22, x - 9), y, i ? 18 : 9, 18, reds.includes(i) ? '#f00000' : '#fff');
    if (r === 0) b.block(x + 10, 1435, 2, 92, '#4a3020');
  }
});
for (let i = 0; i <= 40; i++) b.block(Math.max(22, 17 + i * 22.65), 1539, 10, 50, '#0000e8');

// GBPUSD,M5 with cloud
const c = plot('c', 870, 85);
c.area('42,1103 70,1103 100,1096 138,1075', '42,1197 70,1175 100,1140 120,1105 138,1075', '#fff');
c.area('138,1075 160,1040 190,980 205,915 215,870 230,810 250,775 280,763 300,768 330,800 360,840 390,895 430,915 455,946', '138,1075 190,1030 215,985 240,940 260,920 300,905 350,905 400,930 440,940 455,948', OLIVE);
c.area('455,946 500,942 530,900 555,885 580,845 620,820 650,760 690,690 740,605 780,575 820,490 840,478 870,475 900,435 940,355 975,320 997,290', '455,947 510,940 540,920 580,895 620,880 660,845 700,805 740,755 790,715 830,660 870,640 920,580 960,530 997,492', OLIVE);
c.line('40,785 75,775 120,745 200,695 240,660 300,610 380,520 450,455 520,400 600,320 660,268 700,243 740,205 800,160 850,140 880,115 930,85 990,60', '#ddd', 1, DASH);
c.line('42,1245 120,1208 180,1180 215,1155 290,1130 340,1124 380,1107 450,1065 500,1043 550,1013 600,997 700,950 800,910 860,875 910,858 985,800', '#ddd', 1, DASH);
c.candles(`43 1035 1210 1075 1100 0
55 1050 1155 1075 1103 1
66 1070 1130 1090 1100 0
77 1035 1100 1038 1087 0
88 975 1050 1033 1037 0
100 970 1060 1027 1045 1
111 838 1060 880 1035 0
122 722 900 877 893 1
134 820 970 868 893 0
145 825 1025 862 868 0
157 815 890 845 853 0
168 750 870 785 850 0
180 760 875 780 870 1
191 712 900 735 875 0
202 413 780 600 735 0
213 315 600 347 598 0
224 215 450 275 350 0
235 258 445 278 440 1
247 385 585 435 580 1
258 507 680 580 675 1
270 610 810 675 735 1
281 708 800 735 765 0
292 712 810 735 760 0
304 712 895 740 890 1
315 850 905 868 890 0
327 840 915 868 895 1
338 890 918 895 915 0
350 890 925 892 918 1
361 970 1055 970 1038 1
372 1035 1145 1040 1055 1
384 1030 1150 1055 1103 1
395 1030 1145 1095 1108 0
406 940 1112 957 1095 0
417 915 1015 955 960 0
429 945 1040 965 1025 1
440 975 1115 1050 1060 0
452 955 1135 1055 1063 1
463 850 1130 973 1063 0
474 795 1000 838 970 0
486 843 1000 845 950 1
497 945 1012 975 995 1
509 865 1040 870 995 0
520 680 870 765 868 0
530 658 780 738 765 0
542 643 810 738 785 1
554 740 830 770 810 0
565 660 830 663 830 0
576 613 690 663 685 1
587 647 790 665 750 1
598 702 780 737 745 0
610 645 830 735 785 0
622 715 820 733 800 0
632 540 750 570 735 0
644 490 630 523 575 0
655 425 620 480 525 0
667 423 575 480 570 1
678 485 605 527 570 0
689 453 580 485 527 0
701 418 580 480 520 1
712 475 598 508 518 0
723 355 548 415 500 0
735 370 430 398 415 0
746 367 445 403 425 1
758 418 690 423 627 1
769 405 665 418 585 0
780 218 490 410 458 1
791 285 460 307 458 0
803 240 390 307 325 1
814 230 340 268 335 0
826 250 320 270 315 1
837 310 395 315 383 1
848 355 495 405 490 1
860 440 530 497 502 1
871 382 525 400 508 0
882 232 395 283 395 0
893 250 300 258 283 0
905 133 280 195 260 0
916 122 210 192 207 1
928 155 235 170 200 0
938 160 233 170 182 1
950 125 233 180 184 0
961 177 232 182 225 1
972 197 230 207 222 0
983 165 232 170 210 0
996 120 173 125 170 0`);
c.line('42,605 70,590 95,582 110,595 130,615 150,643 175,643 190,625 215,600 235,583 250,600 260,640 270,690 285,770 300,798 325,808 345,805 365,785 400,770 410,740 425,680 437,645 452,660 465,665 480,640 497,633 515,645 530,630 545,608 560,618 590,607 600,640 615,695 630,705 645,660 660,600 680,592 700,607 725,625 745,620 760,635 775,665 795,652 810,625 825,600 837,595 848,620 860,690 872,745 883,742 895,680 905,620 920,580 945,580 960,605 975,660 990,685', RED, 1, '3 3', 765);
c.line('42,583 55,598 70,590 88,573 100,590 110,600 120,628 133,627 147,653 158,647 168,628 180,633 190,605 202,615 213,577 235,573 245,600 255,655 265,720 280,787 292,793 303,803 315,803 328,811 340,805 350,788 360,787 372,768 383,780 397,770 407,725 417,650 428,617 440,650 452,695 463,680 475,627 487,622 497,645 508,656 520,620 530,592 553,628 565,612 580,605 590,625 600,685 610,730 622,722 635,660 645,600 656,572 667,600 680,612 702,617 723,642 735,610 745,603 758,670 770,665 780,680 792,622 803,620 815,585 827,587 837,610 848,690 860,778 872,768 882,700 893,620 905,573 930,580 950,590 962,640 973,690 985,710 995,645', TEAL, 1, '', 765);
```
